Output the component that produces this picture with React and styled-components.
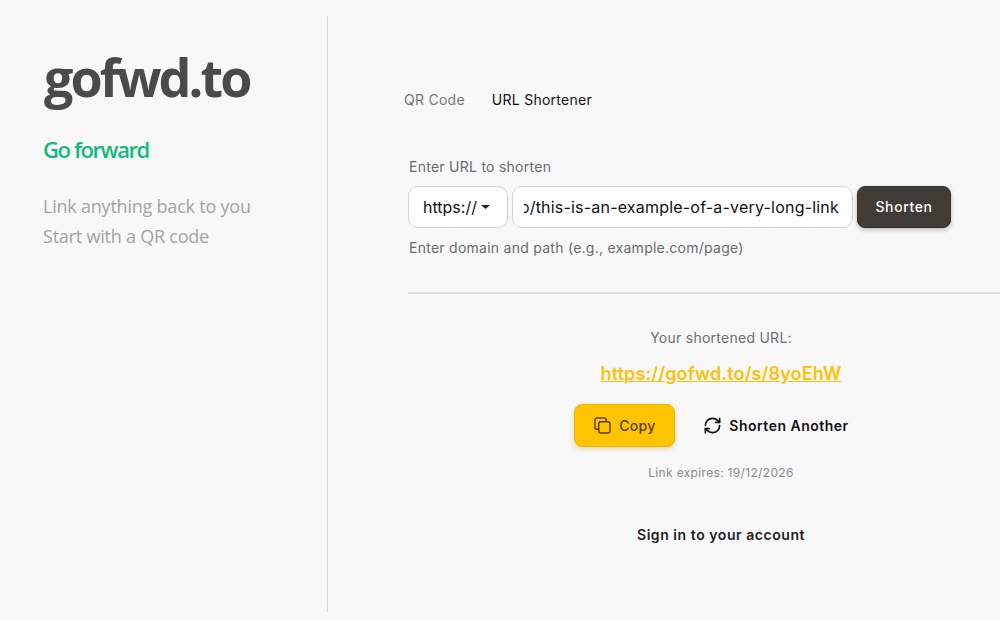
import React from "react";
import styled, { createGlobalStyle } from "styled-components";

const Global = createGlobalStyle`
  html, body { margin: 0; padding: 0; background: #f8f8f8; }
  body { font-family: Inter, "Liberation Sans", sans-serif; overflow: hidden; }
  * { box-sizing: border-box; }
`;

const Page = styled.div`
  display: flex;
  width: 1000px;
  height: 620px;
  padding: 16px 0 8px;
  overflow: hidden;
`;

const Side = styled.aside`
  flex: 0 0 328px;
  border-right: 1px solid #d8d8d8;
  padding: 28px 0 0 43px;
  font-family: "Open Sans", sans-serif;
`;

const Logo = styled.h1`
  margin: 0 0 0 1px;
  font-size: 52px;
  line-height: 66px;
  font-weight: 700;
  letter-spacing: -2.9px;
  color: #4a4a4a;
`;

const Tagline = styled.h2`
  margin: 24px 0 0;
  font-size: 22px;
  line-height: 30px;
  font-weight: 600;
  letter-spacing: -1.4px;
  color: #10b981;
`;

const Blurb = styled.p`
  margin: 27px 0 0;
  font-size: 18px;
  line-height: 30px;
  font-weight: 400;
  letter-spacing: -0.22px;
  color: #a3a3a3;
`;

const Main = styled.main`
  flex: 1;
  min-width: 0;
  padding: 75px 0 0 76px;
  letter-spacing: 0.26px;
`;

const Tabs = styled.nav`
  display: flex;
  gap: 27px;
`;

const Tab = styled.span`
  font-size: 14px;
  line-height: 18px;
  color: ${p => (p.$active ? "#111" : "#767676")};
`;

const Form = styled.section`
  margin: 49px 0 0 4px;
`;

const Label = styled.div`
  padding-left: 1px;
  font-size: 14px;
  line-height: 18px;
  color: #6b6b6b;
`;

const Row = styled.div`
  display: flex;
  gap: 4px;
  margin-top: 10px;
`;

const Field = styled.div`
  height: 42px;
  background: #fff;
  border: 1px solid #d4d4d4;
  border-radius: 10px;
  display: flex;
  align-items: center;
  font-size: 16px;
  color: #111;
  white-space: nowrap;
`;

const Scheme = styled(Field)`
  width: 100px;
  padding-left: 14px;
  gap: 4px;
  letter-spacing: 0;
`;

const UrlBox = styled(Field)`
  width: 341px;
  padding: 0 13px 0 11px;
`;

const UrlClip = styled.div`
  flex: 1;
  min-width: 0;
  display: flex;
  justify-content: flex-end;
  overflow: hidden;
  letter-spacing: 0.2px;
`;

const UrlText = styled.span`
  flex: none;
`;

const ShortenButton = styled.button`
  width: 94px;
  height: 42px;
  padding: 0 0 1px;
  border: 1px solid #35312b;
  border-radius: 8px;
  background: #403c36;
  color: #fff;
  font: 500 14px Inter, sans-serif;
  letter-spacing: 0.6px;
  box-shadow: 0 2px 4px rgba(0, 0, 0, 0.25);
`;

const Hint = styled(Label)`
  margin-top: 11px;
`;

const Divider = styled.hr`
  margin: 35px 0 0;
  border: 0;
  height: 2px;
  background: #dedede;
`;

const Result = styled.section`
  width: 624px;
  display: flex;
  flex-direction: column;
  align-items: center;
  margin-left: 5px;
`;

const ResultLabel = styled(Label)`
  margin-top: 35px;
  padding-left: 0;
  color: #6f6f6f;
`;

const ShortLink = styled.a`
  margin-top: 15px;
  font-size: 18px;
  line-height: 24px;
  font-weight: 600;
  letter-spacing: 0.12px;
  color: #ffc107;
  text-decoration: underline;
`;

const Actions = styled.div`
  display: flex;
  align-items: center;
  gap: 14px;
  margin-top: 18px;
  margin-left: -5px;
`;

const CopyButton = styled.button`
  display: flex;
  align-items: center;
  justify-content: center;
  gap: 8px;
  width: 101px;
  height: 43px;
  background: #ffc400;
  border: 1px solid #eeb800;
  border-radius: 8px;
  color: #5a3a00;
  font: 500 14px Inter, sans-serif;
  letter-spacing: 0.3px;
  box-shadow: 0 2px 5px rgba(180, 130, 0, 0.3);
`;

const GhostButton = styled.button`
  display: flex;
  align-items: center;
  gap: 7px;
  height: 43px;
  padding: 0 14px;
  background: none;
  border: 0;
  color: #111;
  font: 600 14px Inter, sans-serif;
  letter-spacing: 0.5px;
`;

const Expiry = styled.div`
  margin-top: 18px;
  font-size: 12px;
  line-height: 16px;
  color: #8a8a8a;
  letter-spacing: 0.33px;
`;

const SignIn = styled.a`
  margin-top: 45px;
  font-size: 14px;
  line-height: 18px;
  font-weight: 600;
  color: #222;
  letter-spacing: 0.55px;
`;

const Caret = () => (
  <svg width="9" height="4" viewBox="0 0 9 4"><path d="M0 0h9L4.5 4z" fill="#222" /></svg>
);

const CopyIcon = () => (
  <svg width="17" height="17" viewBox="0 0 17 17" fill="none" stroke="#5a3a00" strokeWidth="1.4">
    <rect x="4.7" y="4.7" width="11.3" height="11.3" rx="2.2" />
    <path d="M12.2 4.7V3A2 2 0 0 0 10.2 1H3A2 2 0 0 0 1 3v7.2a2 2 0 0 0 2 2h1.7" />
  </svg>
);

const RefreshIcon = () => (
  <svg width="19" height="19" viewBox="0 0 24 24" fill="none" stroke="#111" strokeWidth="2.1" strokeLinecap="round" strokeLinejoin="round">
    <path d="M3 12a9 9 0 0 1 9-9 9.75 9.75 0 0 1 6.74 2.74L21 8" />
    <path d="M21 3v5h-5" />
    <path d="M21 12a9 9 0 0 1-9 9 9.75 9.75 0 0 1-6.74-2.74L3 16" />
    <path d="M8 16H3v5" />
  </svg>
);

export default function App() {
  return (
    <>
      <Global />
      <Page>
        <Side>
          <Logo>gofwd.to</Logo>
          <Tagline>Go forward</Tagline>
          <Blurb>Link anything back to you<br />Start with a QR code</Blurb>
        </Side>
        <Main>
          <Tabs>
            <Tab>QR Code</Tab>
            <Tab $active>URL Shortener</Tab>
          </Tabs>
          <Form>
            <Label>Enter URL to shorten</Label>
            <Row>
              <Scheme>https:// <Caret /></Scheme>
              <UrlBox>
                <UrlClip>
                  <UrlText>gofwd.to/this-is-an-example-of-a-very-long-link</UrlText>
                </UrlClip>
              </UrlBox>
              <ShortenButton>Shorten</ShortenButton>
            </Row>
            <Hint>Enter domain and path (e.g., example.com/page)</Hint>
            <Divider />
          </Form>
          <Result>
            <ResultLabel>Your shortened URL:</ResultLabel>
            <ShortLink>https://gofwd.to/s/8yoEhW</ShortLink>
            <Actions>
              <CopyButton><CopyIcon />Copy</CopyButton>
              <GhostButton><RefreshIcon />Shorten Another</GhostButton>
            </Actions>
            <Expiry>Link expires: 19/12/2026</Expiry>
            <SignIn>Sign in to your account</SignIn>
          </Result>
        </Main>
      </Page>
    </>
  );
}
